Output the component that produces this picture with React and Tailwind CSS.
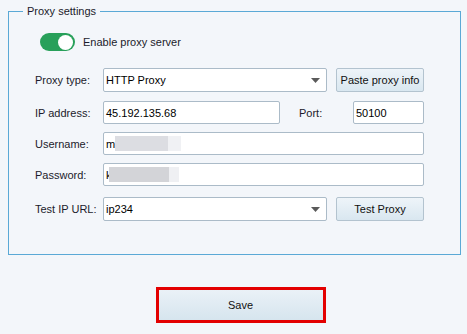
import { useState } from 'react'

// small down arrow used by the two combo boxes
const Caret = () => (
    <svg width="9" height="5" viewBox="0 0 9 5" className="shrink-0">
        <polygon points="0,0 9,0 4.5,5" fill="#5a5a5a" />
    </svg>
)

const Select = ({ value, width }) => (
    <div className={`${width} h-[24px] bg-white border border-[#abbbc8] rounded-[2px] flex items-center justify-between pl-[2px] pr-[6px]`}>
        <span>{value}</span>
        <Caret />
    </div>
)

const Button = ({ children }) => (
    <button className="w-[88px] h-[24px] border border-[#b3c3cf] rounded-[2px] bg-gradient-to-b from-[#eef4f9] to-[#d9e7f0] text-[#111]">
        {children}
    </button>
)

const Label = ({ children }) => (
    <span className="w-[68px] shrink-0 text-[#1b1b2b]">{children}</span>
)

const App = () => {
    const [enabled, setEnabled] = useState(true)

    return (
        <div className="w-[467px] h-[334px] bg-[#f3f6fa] pt-[4px] text-[11px] leading-[14px] text-black" style={{ fontFamily: '"Liberation Sans", Arial, sans-serif' }}>
            {/* Proxy settings group */}
            <fieldset className="ml-[8px] w-[453px] border border-[#5aa9d6] pb-[33px]">
                <legend className="ml-[14px] px-[4px] text-[#1b1b2b]">Proxy settings</legend>

                <div className="pl-[31px] mt-[15px] flex items-center gap-[8px]">
                    <button
                        onClick={() => setEnabled(!enabled)}
                        className={`w-[35px] h-[18px] rounded-full flex items-center px-[2px] ${enabled ? 'bg-[#28a05a] justify-end' : 'bg-[#b9c3cc] justify-start'}`}
                    >
                        <span className="w-[15px] h-[15px] rounded-full bg-white" />
                    </button>
                    <span className="text-[#1b1b2b]">Enable proxy server</span>
                </div>

                <div className="pl-[26px] pr-[36px] text-[11px]">
                    {/* Proxy type */}
                    <div className="mt-[17px] flex items-center">
                        <Label>Proxy type:</Label>
                        <Select value="HTTP Proxy" width="w-[224px]" />
                        <div className="ml-[9px]"><Button>Paste proxy info</Button></div>
                    </div>

                    {/* IP + port */}
                    <div className="mt-[9px] flex items-center">
                        <Label>IP address:</Label>
                        <div className="w-[177px] h-[23px] bg-white border border-[#abbbc8] rounded-[2px] flex items-center pl-[2px]">45.192.135.68</div>
                        <span className="ml-[19px] w-[54px] text-[#1b1b2b]">Port:</span>
                        <div className="w-[71px] h-[23px] bg-white border border-[#abbbc8] rounded-[2px] flex items-center pl-[2px]">50100</div>
                    </div>

                    {/* Username */}
                    <div className="mt-[8px] flex items-center">
                        <Label>Username:</Label>
                        <div className="w-[321px] h-[23px] bg-white border border-[#abbbc8] rounded-[2px] flex items-center pl-[2px]">
                            <span>m</span>
                            <span className="inline-block w-[53px] h-[15px] bg-[#dcdde2]" />
                            <span className="inline-block w-[13px] h-[15px] bg-[#f0f1f4]" />
                        </div>
                    </div>

                    {/* Password */}
                    <div className="mt-[8px] flex items-center">
                        <Label>Password:</Label>
                        <div className="w-[321px] h-[23px] bg-white border border-[#abbbc8] rounded-[2px] flex items-center pl-[2px]">
                            <span>k</span>
                            <span className="inline-block -ml-[3px] w-[60px] h-[15px] bg-[#d3d4d8]" />
                            <span className="inline-block w-[10px] h-[15px] bg-[#eff0f3]" />
                        </div>
                    </div>

                    {/* Test IP URL */}
                    <div className="mt-[11px] flex items-center">
                        <Label>Test IP URL:</Label>
                        <Select value="ip234" width="w-[224px]" />
                        <div className="ml-[9px]"><Button>Test Proxy</Button></div>
                    </div>
                </div>
            </fieldset>

            {/* Save */}
            <div className="mt-[32px] flex justify-center">
                <div className="ml-[14px] w-[170px] h-[36px] border-[3px] border-[#e30000] bg-gradient-to-b from-[#eaf1f7] to-[#d6e5ee] flex items-center justify-center text-[#111]">
                    Save
                </div>
            </div>
        </div>
    )
}

export default App
